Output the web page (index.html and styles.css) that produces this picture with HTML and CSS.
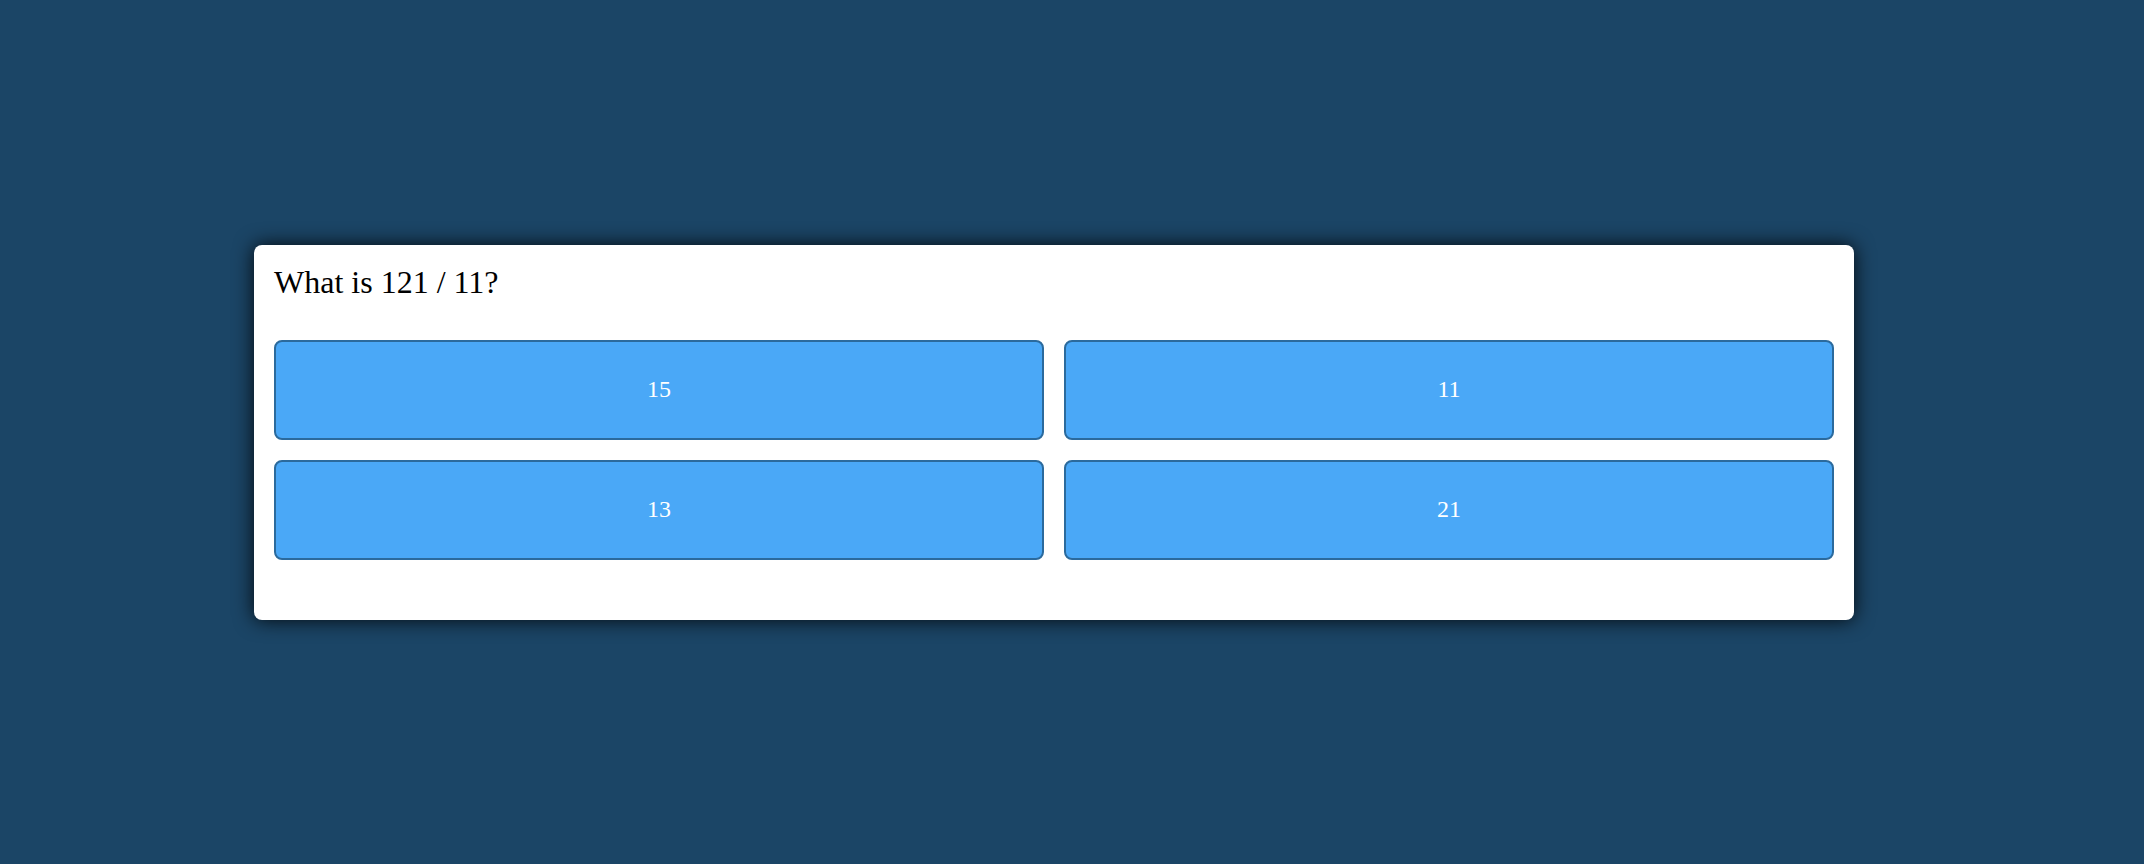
FILE: index.html
```html
<!DOCTYPE html>
<html>
<head>
<meta charset="utf-8">
<link rel="stylesheet" href="styles.css">
</head>
<body>
<main class="stage">
  <section class="card">
    <h2 class="question">What is 121 / 11?</h2>
    <div class="answers">
      <button class="answer">15</button>
      <button class="answer">11</button>
      <button class="answer">13</button>
      <button class="answer">21</button>
    </div>
  </section>
</main>
</body>
</html>
```
FILE: styles.css
```css
html, body {
  margin: 0;
  padding: 0;
  height: 100%;
}
body {
  background: #1b4566;
  font-family: "Liberation Serif", "Times New Roman", serif;
}
.stage {
  height: 100%;
  display: flex;
  align-items: center;
  justify-content: center;
  padding-right: 36px;
  box-sizing: border-box;
}
.card {
  width: 1600px;
  box-sizing: border-box;
  background: #ffffff;
  border-radius: 8px;
  padding: 20px 20px 60px;
  box-shadow: 0 0 20px rgba(0, 0, 0, 0.9);
}
.question {
  margin: 0 0 40px;
  font-size: 32px;
  line-height: 35px;
  font-weight: normal;
  color: #000;
}
.answers {
  display: grid;
  grid-template-columns: 1fr 1fr;
  gap: 20px;
}
.answer {
  height: 100px;
  background: #4aa8f7;
  border: 2px solid #2b6a9d;
  border-radius: 8px;
  color: #ffffff;
  font-family: "Liberation Serif", "Times New Roman", serif;
  font-size: 24px;
  padding: 0;
}
```
